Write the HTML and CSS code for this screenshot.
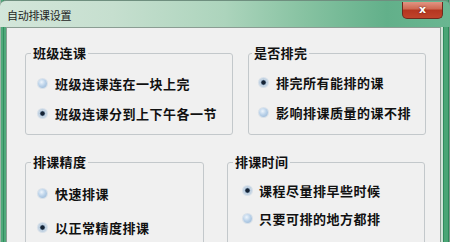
FILE: index.html
```html
<!DOCTYPE html>
<html lang="zh-CN">
<head>
<meta charset="utf-8">
<title>自动排课设置</title>
<link rel="stylesheet" href="styles.css">
</head>
<body>
<div class="window">
  <div class="titlebar">
    <span class="title">自动排课设置</span>
    <button class="close" type="button">x</button>
  </div>
  <div class="client">
    <div class="row row-top">
      <fieldset class="group g1">
        <legend>班级连课</legend>
        <div class="options">
          <label class="opt"><input type="radio" name="lk">班级连课连在一块上完</label>
          <label class="opt"><input type="radio" name="lk" checked>班级连课分到上下午各一节</label>
        </div>
      </fieldset>
      <fieldset class="group g2">
        <legend>是否排完</legend>
        <div class="options">
          <label class="opt"><input type="radio" name="pw" checked>排完所有能排的课</label>
          <label class="opt"><input type="radio" name="pw">影响排课质量的课不排</label>
        </div>
      </fieldset>
    </div>
    <div class="row row-bottom">
      <fieldset class="group g3">
        <legend>排课精度</legend>
        <div class="options">
          <label class="opt"><input type="radio" name="jd">快速排课</label>
          <label class="opt"><input type="radio" name="jd" checked>以正常精度排课</label>
        </div>
      </fieldset>
      <fieldset class="group g4">
        <legend>排课时间</legend>
        <div class="options">
          <label class="opt"><input type="radio" name="sj" checked>课程尽量排早些时候</label>
          <label class="opt"><input type="radio" name="sj">只要可排的地方都排</label>
        </div>
      </fieldset>
    </div>
  </div>
</div>
</body>
</html>
```
FILE: styles.css
```css
html, body {
  margin: 0;
  padding: 0;
  background: #ffffff;
}

.window {
  width: 450px;
  height: 242px;
  overflow: hidden;
  display: flex;
  flex-direction: column;
  background:
    linear-gradient(90deg, #9db5a7 0 1px, #4fa97a 1px 3px, #338d60 3px 4px, #4fa97a 4px 6px, transparent 6px),
    linear-gradient(270deg, #7d978a 0 1px, #2f8a5c 1px 2px, #4aa575 2px 6px, #2f8a5c 6px 7px, #cfe3d7 7px 9px, transparent 9px),
    #4aa575;
  font-family: "Noto Sans CJK SC", "Noto Sans", sans-serif;
}

.titlebar {
  height: 27px;
  flex: none;
  display: flex;
  justify-content: space-between;
  align-items: flex-start;
  box-sizing: border-box;
  border-top: 1px solid #6f8f7f;
  border-radius: 6px 6px 0 0;
  background: linear-gradient(90deg, #d3e6da 0%, #c6dfcf 25%, #acd4bc 50%, #86c2a1 68%, #62b08a 86%, #6ab691 100%);
}

.title {
  font-size: 11px;
  line-height: 14px;
  color: #1e1e1e;
  padding: 7px 0 0 7px;
  letter-spacing: -0.3px;
}

.close {
  width: 41px;
  height: 17px;
  margin: 1px 7px 0 0;
  padding: 0;
  border: 1px solid #6e2a1e;
  border-top: none;
  border-radius: 0 0 5px 5px;
  background: linear-gradient(#e19483 0%, #cf6a53 42%, #b53620 52%, #c0432b 100%);
  color: #ffffff;
  font-family: "DejaVu Sans", sans-serif;
  font-weight: bold;
  font-size: 11px;
  line-height: 14px;
  text-shadow: 0 0 2px #5a1a10;
}

.client {
  flex: 1;
  margin: 0 9px 0 6px;
  border: 1px solid #8b9d93;
  border-bottom: none;
  background: #f0f0f0;
  padding: 18px 0 0 18px;
  display: flex;
  flex-direction: column;
  gap: 20px;
}

.row {
  display: flex;
}

.row-top { gap: 15px; }
.row-bottom { gap: 23px; }

.group {
  margin: 0;
  padding: 0;
  border: 1px solid #c3c8cb;
  border-radius: 3px;
  min-width: 0;
  box-sizing: border-box;
}

.group legend {
  font-size: 13px;
  line-height: 14px;
  font-weight: bold;
  color: #111111;
  padding: 0 2px;
  margin-left: 5px;
  letter-spacing: 0.3px;
}

.g1 { width: 208px; }
.g2 { width: 178px; }
.g3 { width: 179px; }
.g4 { width: 198px; }

.g2 legend { margin-left: 3px; }
.g4 legend { margin-left: 5px; }

.options {
  display: flex;
  flex-direction: column;
}

.g1 .options { padding: 15px 0 13px 12px; gap: 14px; }
.g2 .options { padding: 14px 0 14px 10px; gap: 14px; }
.g3 .options { padding: 16px 0 30px 12px; gap: 18px; }
.g4 .options { padding: 13px 0 30px 15px; gap: 12px; }

.opt {
  display: flex;
  align-items: center;
  gap: 8px;
  height: 16px;
  font-size: 13px;
  font-weight: bold;
  color: #111111;
  letter-spacing: 0.5px;
  white-space: nowrap;
}

.g4 .opt { gap: 7px; }

.opt input {
  appearance: none;
  -webkit-appearance: none;
  margin: 0;
  width: 9px;
  height: 9px;
  border-radius: 50%;
  flex: none;
  background: radial-gradient(circle at 40% 35%, #eef5fc 0, #bcd3ea 45%, #8fb1d2 100%);
  box-shadow: 0 0 0 1px rgba(200, 214, 228, 0.6);
}

.opt input:checked {
  background: radial-gradient(circle at 50% 50%, #142234 0 1.8px, #7f97b0 2.4px, #c9d8e6 3.2px, #a3bcd4 100%);
}
```
